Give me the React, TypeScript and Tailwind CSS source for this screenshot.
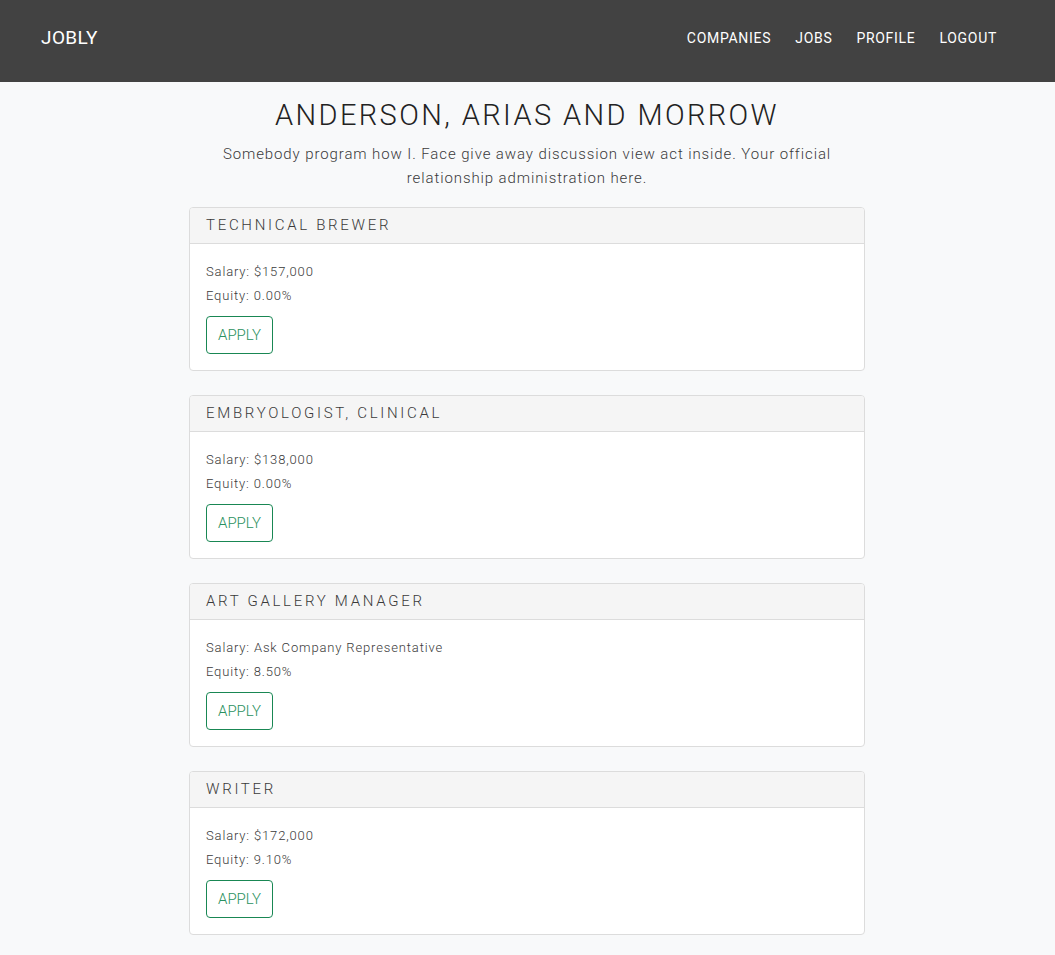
import React from 'react';

interface Job { title: string; salary: string; equity: string; }

const jobs: Job[] = [
  { title: 'Technical Brewer', salary: '$157,000', equity: '0.00%' },
  { title: 'Embryologist, clinical', salary: '$138,000', equity: '0.00%' },
  { title: 'Art gallery manager', salary: 'Ask Company Representative', equity: '8.50%' },
  { title: 'Writer', salary: '$172,000', equity: '9.10%' },
];

const JobCard: React.FC<{ job: Job }> = ({ job }) => (
  <div className="rounded border border-[#dcdcdc] bg-white overflow-hidden">
    <div className="h-[36px] flex items-center px-4 bg-[#f5f5f5] border-b border-[#dcdcdc] text-[15px] uppercase tracking-[2.7px] text-[#3a3a3a]">
      {job.title}
    </div>
    <div className="p-4 text-[13px] leading-6 tracking-[0.85px] text-[#3a3a3a]">
      <div>Salary: {job.salary}</div>
      <div>Equity: {job.equity}</div>
      <button className="mt-2 h-[38px] w-[67px] rounded border border-[#198754] text-[#2a9160] text-[15px] font-light tracking-normal">
        APPLY
      </button>
    </div>
  </div>
);

export default function App() {
  return (
    <div className="min-h-screen bg-[#f8f9fa] font-['Roboto',sans-serif] font-light">
      <nav className="h-[82px] bg-[#424242] flex items-center justify-between pl-[41px] pr-[58px] pb-[6px] text-white">
        <span className="text-[19px] font-normal tracking-[0.4px]">JOBLY</span>
        <div className="flex gap-6 text-[14px] font-normal tracking-[0.7px]">
          <span>COMPANIES</span>
          <span>JOBS</span>
          <span>PROFILE</span>
          <span>LOGOUT</span>
        </div>
      </nav>
      <main className="w-[676px] ml-[189px] pt-[15px] pb-6">
        <h1 className="text-center text-[29px] leading-9 tracking-[2.4px] text-[#222] font-light">
          ANDERSON, ARIAS AND MORROW
        </h1>
        <p className="mt-[9px] mx-auto w-[620px] text-center text-[15px] leading-6 tracking-[0.9px] text-[#3a3a3a]">
          Somebody program how I. Face give away discussion view act inside. Your official relationship administration here.
        </p>
        <div className="mt-[17px] flex flex-col gap-6">
          {jobs.map(j => <JobCard key={j.title} job={j} />)}
        </div>
      </main>
    </div>
  );
}
